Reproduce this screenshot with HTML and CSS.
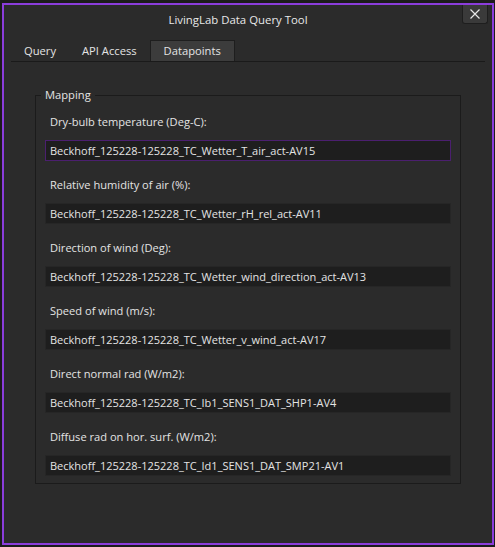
FILE: index.html
```html
<!DOCTYPE html>
<html>
<head>
<meta charset="utf-8">
<link rel="stylesheet" href="styles.css">
</head>
<body>
<div class="window">
  <div class="titlebar">
    <div class="title">LivingLab Data Query Tool</div>
    <button class="close" aria-label="Close">
      <svg width="12" height="12" viewBox="0 0 12 12"><path d="M1.5 1.5 L10.5 10.5 M10.5 1.5 L1.5 10.5" stroke="#e8e8e8" stroke-width="1.2" fill="none"/></svg>
    </button>
  </div>
  <div class="tabs">
    <div class="tab">Query</div>
    <div class="tab">API Access</div>
    <div class="tab active">Datapoints</div>
  </div>
  <div class="panel">
    <fieldset class="group">
      <legend>Mapping</legend>
      <div class="row">
        <div class="label">Dry-bulb temperature (Deg-C):</div>
        <div class="field focus">Beckhoff_125228-125228_TC_Wetter_T_air_act-AV15</div>
      </div>
      <div class="row">
        <div class="label">Relative humidity of air (%):</div>
        <div class="field">Beckhoff_125228-125228_TC_Wetter_rH_rel_act-AV11</div>
      </div>
      <div class="row">
        <div class="label">Direction of wind (Deg):</div>
        <div class="field">Beckhoff_125228-125228_TC_Wetter_wind_direction_act-AV13</div>
      </div>
      <div class="row">
        <div class="label">Speed of wind (m/s):</div>
        <div class="field">Beckhoff_125228-125228_TC_Wetter_v_wind_act-AV17</div>
      </div>
      <div class="row">
        <div class="label">Direct normal rad (W/m2):</div>
        <div class="field">Beckhoff_125228-125228_TC_Ib1_SENS1_DAT_SHP1-AV4</div>
      </div>
      <div class="row">
        <div class="label">Diffuse rad on hor. surf. (W/m2):</div>
        <div class="field">Beckhoff_125228-125228_TC_Id1_SENS1_DAT_SMP21-AV1</div>
      </div>
    </fieldset>
  </div>
</div>
</body>
</html>
```

FILE: styles.css
```css
html, body {
  margin: 0;
  padding: 0;
  background: #1c1c1c;
  width: 495px;
  height: 547px;
  overflow: hidden;
}
body {
  font-family: "Open Sans", "Noto Sans", sans-serif;
  color: #e4e4e4;
}
.window {
  box-sizing: border-box;
  width: 492px;
  height: 542px;
  margin: 3px 0 0 2px;
  border: 2px solid #8b3ddb;
  background: #2b2b2b;
  display: flex;
  flex-direction: column;
}
.titlebar {
  display: flex;
  align-items: flex-start;
  height: 31px;
  padding-right: 4px;
}
.title {
  flex: 1;
  text-align: center;
  font-size: 11.4px;
  line-height: 30px;
  padding-left: 10px;
  color: #e8e8e8;
}
.close {
  width: 26px;
  height: 19px;
  margin: 0;
  padding: 0;
  box-sizing: border-box;
  background: #3a3a3a;
  border: 1px solid #1e1e1e;
  border-top: none;
  border-radius: 0 0 3px 3px;
  display: flex;
  align-items: center;
  justify-content: center;
}
.tabs {
  display: flex;
  margin: 4px 7px 0;
  border-bottom: 1px solid #1a1a1a;
  height: 21px;
}
.tab {
  padding: 0 13px;
  font-size: 11.2px;
  line-height: 21px;
  color: #e4e4e4;
}
.tab.active {
  background: #3c3c3c;
  border: 1px solid #1e1e1e;
  border-bottom: none;
  padding: 0 13px;
  line-height: 20px;
  height: 20px;
}
.panel {
  padding: 25px 31px 0;
}
.group {
  margin: 0;
  box-sizing: border-box;
  border: 1px solid #1b1b1b;
  padding: 9px 9px 7px 9px;
  min-width: 0;
}
.group legend {
  font-size: 11.2px;
  padding: 0 4px;
  margin-left: -4px;
  line-height: 16px;
  color: #e4e4e4;
}
.row {
  display: flex;
  flex-direction: column;
}
.label {
  font-size: 11.1px;
  line-height: 20px;
  padding-left: 5px;
  height: 20px;
  margin-bottom: 8px;
}
.field {
  box-sizing: border-box;
  height: 21px;
  border: 1px solid #262626;
  background: #1e1e1e;
  font-size: 11px;
  line-height: 19px;
  padding-left: 4px;
  margin-bottom: 14px;
  white-space: nowrap;
  overflow: hidden;
}
.row:last-child .field {
  margin-bottom: 0;
}
.field.focus {
  border-color: #4b1f6f;
}
```
